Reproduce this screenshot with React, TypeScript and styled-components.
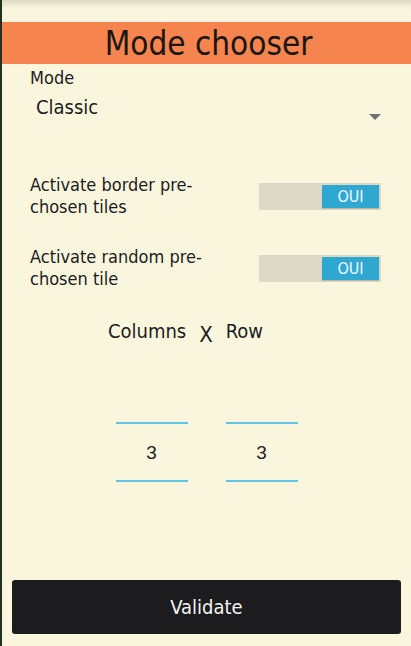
import React, { useState } from 'react';
import styled, { createGlobalStyle } from 'styled-components';

const GlobalStyle = createGlobalStyle`
  html, body {
    margin: 0;
    padding: 0;
    background: #faf6de;
  }
  body {
    font-family: "DejaVu Sans Condensed", "DejaVu Sans", sans-serif;
    color: #1c1c1c;
  }
`;

const Screen = styled.div`
  width: 411px;
  height: 646px;
  box-sizing: border-box;
  border-left: 2px solid #26301e;
  background: linear-gradient(#dcd9c4 0px, #faf6de 9px);
  padding-top: 22px;
  display: flex;
  flex-direction: column;
  overflow: hidden;
`;

const Header = styled.h1`
  margin: 0;
  height: 42px;
  background: #f5844f;
  font-size: 33px;
  font-weight: normal;
  line-height: 44px;
  text-align: center;
  color: #1a1612;
  padding-left: 4px;
`;

const Field = styled.div`
  padding: 2px 30px 0 28px;
`;

const Label = styled.div`
  font-size: 18px;
  line-height: 24px;
`;

const Select = styled.div`
  position: relative;
  box-sizing: border-box;
  height: 48px;
  padding: 7px 0 0 6px;
  font-size: 20px;
  line-height: 20px;
`;

const Arrow = styled.span`
  position: absolute;
  right: 0;
  top: 24px;
  width: 0;
  height: 0;
  border-left: 6px solid transparent;
  border-right: 6px solid transparent;
  border-top: 6px solid #707070;
`;

const OptionRow = styled.div<{ $top: number }>`
  display: flex;
  align-items: center;
  justify-content: space-between;
  margin-top: ${p => p.$top}px;
  padding: 0 30px 0 28px;
`;

const OptionText = styled.div`
  font-size: 18px;
  line-height: 22px;
  width: 215px;
`;

const Track = styled.button<{ $on: boolean }>`
  width: 122px;
  height: 27px;
  border: none;
  padding: 2px;
  background: #dcd9c6;
  display: flex;
  justify-content: ${p => (p.$on ? 'flex-end' : 'flex-start')};
  cursor: pointer;
`;

const Knob = styled.span`
  width: 57px;
  height: 23px;
  background: #2ea8d0;
  color: #eef8fc;
  font-family: "DejaVu Sans Condensed", "DejaVu Sans", sans-serif;
  font-size: 16px;
  line-height: 23px;
  text-align: center;
  box-shadow: 0 1px 1px rgba(0, 0, 0, 0.15);
`;

const SizeTitle = styled.div`
  display: flex;
  justify-content: center;
  align-items: center;
  gap: 13px;
  margin-top: 25px;
  font-size: 20px;
  line-height: 24px;
  padding-right: 42px;
`;

const Cross = styled.span`
  font-size: 22px;
  margin-top: 8px;
`;

const Inputs = styled.div`
  display: flex;
  justify-content: center;
  gap: 38px;
  margin-top: 75px;
`;

const NumberInput = styled.input`
  width: 72px;
  height: 60px;
  box-sizing: border-box;
  border: none;
  border-top: 2px solid #5ec5e5;
  border-bottom: 2px solid #5ec5e5;
  background: transparent;
  padding: 2px 0 0 0;
  text-align: center;
  font-family: "Liberation Sans", sans-serif;
  font-size: 19px;
  color: #222;
  outline: none;
`;

const Spacer = styled.div`
  flex: 1;
`;

const ValidateButton = styled.button`
  margin: 0 10px 12px 10px;
  height: 54px;
  border: none;
  border-radius: 3px;
  background: #1c1b1d;
  color: #f4f4f4;
  font-family: "DejaVu Sans Condensed", "DejaVu Sans", sans-serif;
  font-size: 20px;
  font-weight: normal;
  cursor: pointer;
`;

export default function App() {
  const [border, setBorder] = useState(true);
  const [random, setRandom] = useState(true);
  const [cols, setCols] = useState('3');
  const [rows, setRows] = useState('3');

  return (
    <>
      <GlobalStyle />
      <Screen>
        <Header>Mode chooser</Header>
        <Field>
          <Label>Mode</Label>
          <Select>
            Classic
            <Arrow />
          </Select>
        </Field>
        <OptionRow $top={36}>
          <OptionText>Activate border pre-chosen tiles</OptionText>
          <Track $on={border} onClick={() => setBorder(!border)}>
            <Knob>{border ? 'OUI' : 'NON'}</Knob>
          </Track>
        </OptionRow>
        <OptionRow $top={28}>
          <OptionText>Activate random pre-chosen tile</OptionText>
          <Track $on={random} onClick={() => setRandom(!random)}>
            <Knob>{random ? 'OUI' : 'NON'}</Knob>
          </Track>
        </OptionRow>
        <SizeTitle>
          <span>Columns</span>
          <Cross>X</Cross>
          <span>Row</span>
        </SizeTitle>
        <Inputs>
          <NumberInput value={cols} onChange={e => setCols(e.target.value)} />
          <NumberInput value={rows} onChange={e => setRows(e.target.value)} />
        </Inputs>
        <Spacer />
        <ValidateButton>Validate</ValidateButton>
      </Screen>
    </>
  );
}
